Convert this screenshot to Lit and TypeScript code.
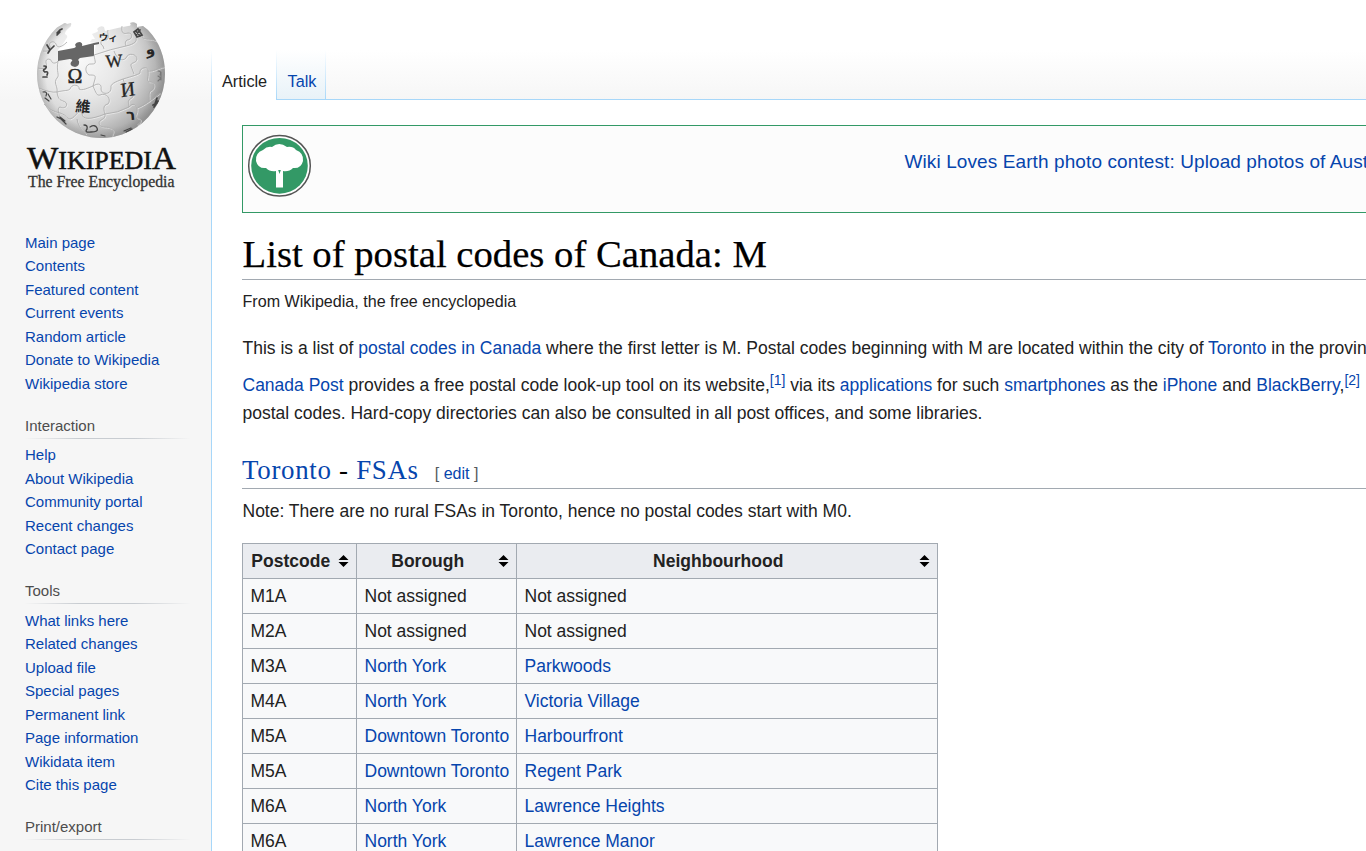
import { LitElement, html, svg, css } from "lit";
import { customElement } from "lit/decorators.js";

type Row = [string, string, string];

const NAV: { title: string; items: string[] }[] = [
  { title: "", items: ["Main page", "Contents", "Featured content", "Current events", "Random article", "Donate to Wikipedia", "Wikipedia store"] },
  { title: "Interaction", items: ["Help", "About Wikipedia", "Community portal", "Recent changes", "Contact page"] },
  { title: "Tools", items: ["What links here", "Related changes", "Upload file", "Special pages", "Permanent link", "Page information", "Wikidata item", "Cite this page"] },
  { title: "Print/export", items: [] },
];

const ROWS: Row[] = [
  ["M1A", "Not assigned", "Not assigned"],
  ["M2A", "Not assigned", "Not assigned"],
  ["M3A", "North York", "Parkwoods"],
  ["M4A", "North York", "Victoria Village"],
  ["M5A", "Downtown Toronto", "Harbourfront"],
  ["M5A", "Downtown Toronto", "Regent Park"],
  ["M6A", "North York", "Lawrence Heights"],
  ["M6A", "North York", "Lawrence Manor"],
];

@customElement("wiki-logo")
export class WikiLogo extends LitElement {
  static styles = css`
    :host { display: block; }
    svg { display: block; }
    .serif { font-family: "Liberation Serif", serif; }
    .cjk { font-family: "Noto Sans CJK TC", sans-serif; }
    .any { font-family: "DejaVu Sans", sans-serif; }
  `;
  render() {
    const seams = [
      "M43 51 C49 52 51 49 50 46 C48 42 54 40 56 44 C57 48 61 48 67 42",
      "M38 68 C44 70 48 67 46 63 C45 58 51 58 52 62 C53 64 57 63 58 61",
      "M58 61 C56 72 60 75 57 78 C53 83 58 86 57 92 Q50 93 39 88",
      "M57 92 C65 90 68 91 70 89 C72 83 80 85 79 89 C82 91 88 88 93 86",
      "M94 55 C95 62 97 64 92 64 C85 63 84 72 89 75 C94 75 96 75 95 79 L93 86",
      "M93 86 C99 82 102 85 101 89 C101 95 111 95 111 88 C110 84 115 82 123 79",
      "M94 55 Q111 49 126 46",
      "M114 51 C117 59 122 62 126 58 C128 52 137 54 137 59 C136 64 130 62 131 66 L134 74",
      "M104 49 L103 46 C99 44 101 38 106 40 C110 39 107 33 108 30",
      "M122 26 C121 34 124 34 128 33 C134 33 132 40 127 40 C124 42 126 46 126 46 C135 44 137 41 136 38 C137 33 143 33 143 38 C146 40 150 38 156 41",
      "M123 79 C133 76 137 75 140 73 C139 67 149 66 148 71 C153 72 158 68 164 67",
      "M123 79 C126 86 124 89 128 90 C134 91 135 97 130 99 C127 101 129 104 129 107",
      "M93 86 C96 93 97 96 100 95 C106 92 112 99 108 104 C102 105 104 111 105 114",
      "M57 92 C58 101 62 100 63 101 C70 103 66 110 60 107 C56 108 60 116 60 117",
      "M44 104 Q50 111 60 113 C68 116 66 118 70 119 C77 117 77 109 82 113 C82 120 90 120 105 114",
      "M105 114 Q118 113 129 107 C133 102 136 105 137 108 C145 105 152 99 160 93",
      "M105 114 C106 120 99 119 99 123 C100 129 106 126 110 128 C115 130 113 133 112 136",
      "M77 119 Q78 127 86 134",
      "M137 108 C138 114 134 115 137 118 C142 119 142 121 137 125",
      "M148 71 C149 77 146 80 149 82 C156 81 155 90 150 91 C148 94 150 99 149 102",
    ];
    return html`
      <svg width="160" height="190" viewBox="20 10 160 190" aria-label="Wikipedia">
        <defs>
          <radialGradient id="ball" gradientUnits="userSpaceOnUse" cx="80" cy="60" r="92">
            <stop offset="0" stop-color="#f8f8f8" />
            <stop offset="0.4" stop-color="#e8e8e8" />
            <stop offset="0.66" stop-color="#d2d2d2" />
            <stop offset="0.87" stop-color="#adadad" />
            <stop offset="1" stop-color="#888" />
          </radialGradient>
          <radialGradient id="rim" gradientUnits="userSpaceOnUse" cx="101" cy="74" r="64">
            <stop offset="0.86" stop-color="#888" stop-opacity="0" />
            <stop offset="1" stop-color="#888" stop-opacity="0.4" />
          </radialGradient>
          <path id="shell" d="M57 27.500 L63 24 Q65 22 67 24 L71 23 Q72 26 69 28 Q65 31 65 34 Q69 36 66 39 Q64 43 58 50 L59 61 L73 59 L94 56 L96 43 L90 42 L92 39 L95 39 L92 34 L97 32 Q99 31 97 29 Q100 25 104 27 L105 31 Q116 28 128 26 Q132 26 130 23 Q134 21 137 24 L137 27 L143 26 L148 30 Q165 48 165 74 A64 64 0 1 1 57 27.500Z" />
        </defs>
        <use href="#shell" fill="url(#ball)" />
        <use href="#shell" fill="url(#rim)" />
        <path d="M58 51 L74 48 Q77 47 75 45 Q76 42 80 42 Q83 43 82 46 L94 43 L99 42 L99 44 L94 45 L94 56 L80 58 Q77 60 79 61 Q80 66 75 67 Q69 66 71 62 Q74 60 70 59 L58 61Z" fill="#666" />
        <g fill="none" stroke="#fafafa" stroke-width="1" transform="translate(.8 .8)" opacity=".55">${seams.map((d) => svg`<path d=${d} />`)}</g>
        <g fill="none" stroke="#aaa" stroke-width=".8">${seams.map((d) => svg`<path d=${d} />`)}</g>
        <g fill="#262626" text-anchor="middle">
          <text class="serif" x="75" y="83" font-size="20" stroke="#262626" stroke-width=".4">Ω</text>
          <text class="serif" font-size="18" stroke="#262626" stroke-width=".3" transform="translate(114.500 67) rotate(-4)">W</text>
          <text class="serif" font-size="20" stroke="#262626" stroke-width=".3" transform="translate(128.500 96) rotate(-9) skewX(-4)">И</text>
          <text class="cjk" font-size="15" font-weight="bold" transform="translate(82.500 112) rotate(5)">維</text>
          <text class="any" font-size="15" font-weight="bold" transform="translate(131 120) rotate(-4)">ר</text>
          <text class="any" font-size="15" font-weight="bold" transform="translate(151 54) rotate(-15)">و</text>
          <text class="cjk" font-size="9.500" font-weight="bold" transform="translate(108 41) rotate(3)">ウィ</text>
        </g>
        <g fill="none" stroke="#444" stroke-width="1.700" stroke-linecap="round">
          <path d="M134 32 L138 29 L142 35 L137 37Z M136 31 L140 36 M140 30 L136 35" />
          <path d="M47 45 L50 50 L54 46 M50 50 L48 53 M57 33 L60 30 L62 29 M57 35 L60 32" />
          <path d="M44 66 Q48 66 45 69 Q42 70 45 72 Q49 71 47 75 M43 77 L47 77" />
          <path d="M43 92 Q48 91 46 96 M48 94 L51 99 M45 98 L49 101" stroke-width="1.200" />
          <path d="M57 117 L61 119 L66 124 M60 117 L65 121" stroke-width="1.200" />
          <path d="M84 125 Q88 125 87 129 Q84 133 91 132 Q99 132 97 128 Q95 124 90 127" stroke-width="1.300" />
          <path d="M124 131 L131 128 M126 132 L132 129 M101 135 L105 136" stroke-width="1.200" />
          <path d="M157 98 L155 104 M158 101 L154 107 M153 105 L157 103" />
          <path d="M158 71 Q162 71 160 75 M158 76 L161 78 L158 81 M161 72 L161 80" stroke="#777" stroke-width="1.100" />
        </g>
        <g class="serif" fill="#111">
          <text x="27" y="169" font-size="32" textLength="149" lengthAdjust="spacingAndGlyphs" stroke="#111" stroke-width=".5">W<tspan font-size="25">IKIPEDI</tspan>A</text>
          <text x="28" y="187" font-size="16.500" fill="#333" stroke="#333" stroke-width=".3" textLength="146.500" lengthAdjust="spacingAndGlyphs">The Free Encyclopedia</text>
        </g>
      </svg>`;
  }
}

@customElement("app-root")
export class AppRoot extends LitElement {
  static styles = css`
    :host {
      display: block;
      width: 1366px;
      height: 851px;
      overflow: hidden;
      font-family: "Liberation Sans", Arial, sans-serif;
      color: #222;
      background: linear-gradient(#fff 50px, #f6f6f6 100px);
    }
    a { color: #0645ad; text-decoration: none; }
    .page { display: grid; grid-template-columns: 211px 1155px; height: 851px; }
    .side { padding: 10px 0 0 20px; box-sizing: border-box; overflow: hidden; }
    .group { font-size: 15px; padding-left: 5px; margin-bottom: 18.400px; }
    .first { margin-top: 31px; margin-bottom: 18.500px; }
    .title { height: 24px; line-height: 24px; color: #4d4d4d; width: 165px; border-bottom: 1px solid; border-image: linear-gradient(to right, #f6f6f6, #c8ccd1 33%, #c8ccd1 66%, #f6f6f6) 1; margin-bottom: 4.900px; }
    .item { display: block; height: 23.440px; line-height: 23.440px; }
    .main { display: flex; flex-direction: column; min-width: 0; height: 851px; overflow: hidden; }
    .tabs { display: flex; height: 50px; margin-top: 50px; flex: none; font-size: 16.250px; line-height: 63px; }
    .edge { width: 1px; background: linear-gradient(#fff, #a7d7f9); }
    .tab { box-sizing: border-box; padding-left: 10px; height: 50px; }
    .article { width: 64px; background: #fff; color: #222; }
    .talk { width: 48px; padding-left: 10.500px; border-bottom: 1px solid #a7d7f9; background: linear-gradient(#fff, #e8f2f8); }
    .rest { flex: 1; border-bottom: 1px solid #a7d7f9; height: 49px; }
    .content { flex: 1; background: #fff; border-left: 1px solid #a7d7f9; padding: 25px 0 0 30px; white-space: nowrap; overflow: hidden; }
    .banner { display: flex; height: 86px; width: 1400px; border: 1px solid #339966; background: #fcfcfc; }
    .tree { margin: 8px 0 0 4px; flex: none; }
    .slogan { margin-left: 592.500px; font-size: 19px; line-height: 72px; letter-spacing: .1px; }
    h1, h2 { font-family: Georgia, "Liberation Serif", serif; font-weight: 400; color: #000; margin: 0; border-bottom: 1px solid #a2a9b1; }
    h1 { height: 66px; line-height: 83px; font-size: 38.700px; text-indent: .5px; -webkit-text-stroke: .25px; }
    .from { font-size: 16.100px; line-height: 20px; margin: 11px 0 0 .5px; }
    .para { font-size: 17.500px; line-height: 28px; margin: 0; padding-left: .5px; }
    .intro { margin-top: 23px; }
    .lookup { margin-top: 9px; }
    sup { font-size: 14px; line-height: 1; vertical-align: baseline; position: relative; top: -6px; }
    h2 { height: 34px; line-height: 32px; font-size: 26.900px; letter-spacing: .7px; margin-top: 27px; }
    .edit { font-family: "Liberation Sans", sans-serif; font-size: 16px; letter-spacing: 0; margin-left: 16px; color: #54595d; }
    .note { margin-top: 8px; }
    table { width: 696px; table-layout: fixed; border-collapse: collapse; margin-top: 18px; font-size: 17.500px; background: #f8f9fa; }
    .c1 { width: 114px; }
    .c2 { width: 160px; }
    th, td { box-sizing: border-box; height: 35px; padding: 0 6.500px 0 7.500px; border: 1px solid #a2a9b1; text-align: left; line-height: 28px; }
    th { background: #eaecf0; }
    .head { display: flex; align-items: center; justify-content: space-between; }
    .label { flex: 1; text-align: center; padding-right: 6.500px; }
    .sort { flex: none; width: 11px; height: 12px; margin-right: 1px; }
  `;

  private place(name: string) {
    return name === "Not assigned" ? name : html`<a>${name}</a>`;
  }

  render() {
    return html`
      <div class="page">
        <nav class="side">
          <wiki-logo></wiki-logo>
          ${NAV.map((g) => html`
            <div class="group ${g.title ? "" : "first"}">
              ${g.title ? html`<div class="title">${g.title}</div>` : ""}
              ${g.items.map((i) => html`<a class="item">${i}</a>`)}
            </div>`)}
        </nav>
        <div class="main">
          <div class="tabs">
            <div class="edge"></div>
            <div class="tab article">Article</div>
            <div class="edge"></div>
            <a class="tab talk">Talk</a>
            <div class="edge"></div>
            <div class="rest"></div>
          </div>
          <main class="content">
            <div class="banner">
              <svg class="tree" width="65" height="64" viewBox="0 0 65 64">
                <ellipse cx="32.500" cy="31.800" rx="30.800" ry="30.300" fill="#fff" stroke="#555" stroke-width="1.500" />
                <ellipse cx="32.500" cy="31.800" rx="28.300" ry="27.900" fill="#339966" />
                <path d="M25 13 Q32 7 40 13 Q46 12 49 16 Q57 19 56 27 Q54 35 46 34 Q42 38 36 37 L36 53.500 H29 V37 Q23 38 19 34 Q11 35 9 27 Q8 19 16 16 Q20 12 25 13Z" fill="#fff" />
                <path d="M31.200 36 L32.500 40 L33.800 36Z" fill="#339966" />
              </svg>
              <a class="slogan">Wiki Loves Earth photo contest: Upload photos of Austria</a>
            </div>
            <h1>List of postal codes of Canada: M</h1>
            <div class="from">From Wikipedia, the free encyclopedia</div>
            <p class="para intro">This is a list of <a>postal codes in Canada</a> where the first letter is M. Postal codes beginning with M are located within the city of <a>Toronto</a> in the province</p>
            <p class="para lookup"><a>Canada Post</a> provides a free postal code look-up tool on its website,<sup><a>[1]</a></sup> via its <a>applications</a> for such <a>smartphones</a> as the <a>iPhone</a> and <a>BlackBerry</a>,<sup><a>[2]</a></sup></p>
            <p class="para">postal codes. Hard-copy directories can also be consulted in all post offices, and some libraries.</p>
            <h2><a>Toronto</a> - <a>FSAs</a><span class="edit">[ <a>edit</a> ]</span></h2>
            <p class="para note">Note: There are no rural FSAs in Toronto, hence no postal codes start with M0.</p>
            <table>
              <colgroup><col class="c1" /><col class="c2" /><col /></colgroup>
              <thead>
                <tr>${["Postcode", "Borough", "Neighbourhood"].map((h) => html`
                  <th><div class="head"><span class="label">${h}</span>
                    <svg class="sort" viewBox="0 0 11 12"><path d="M.5 5 L5.500 0 L10.500 5Z M.5 7 L5.500 12 L10.500 7Z" fill="#000" /></svg>
                  </div></th>`)}
                </tr>
              </thead>
              <tbody>
                ${ROWS.map(([code, borough, hood]) => html`<tr><td>${code}</td><td>${this.place(borough)}</td><td>${this.place(hood)}</td></tr>`)}
              </tbody>
            </table>
          </main>
        </div>
      </div>`;
  }
}
